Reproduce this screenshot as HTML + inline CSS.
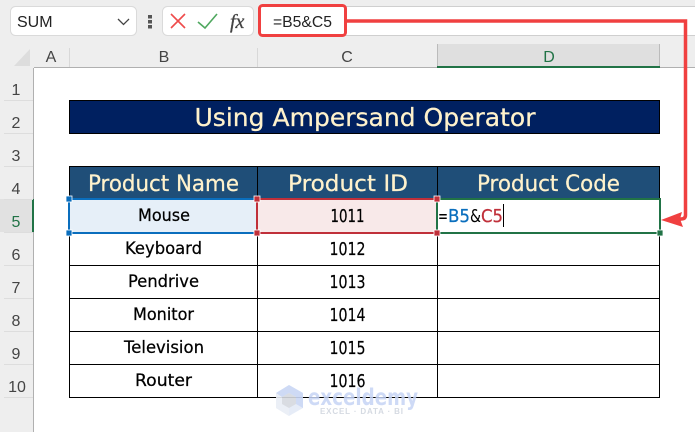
<!DOCTYPE html>
<html><head><meta charset="utf-8"><style>
html,body{margin:0;padding:0;background:#fff;width:695px;height:432px;overflow:hidden}
svg{display:block}
text{font-family:"Comic Sans MS","DejaVu Sans",sans-serif}
.u{font-family:"Liberation Sans",sans-serif}
.t{fill:#FFF2CC;text-anchor:middle;stroke:#FFF2CC;stroke-width:.25}
.c{fill:#000;font-size:17px;text-anchor:middle;stroke:#000;stroke-width:.25}
.n{fill:#000;font-size:18px;text-anchor:middle;stroke:#000;stroke-width:.2}
.h{font-family:"Liberation Sans",sans-serif;fill:#444;font-size:16px;text-anchor:middle}
</style></head><body>
<svg width="695" height="432" viewBox="0 0 695 432" xmlns="http://www.w3.org/2000/svg">
<!-- toolbar -->
<rect x="0" y="0" width="695" height="68" fill="#EEEEEE"/>
<rect x="0" y="68" width="34" height="364" fill="#EEEEEE"/>
<rect x="260" y="6" width="435" height="30" fill="#fff"/>
<rect x="345" y="6" width="350" height="1" fill="#CFCFCF"/>
<rect x="345" y="35" width="350" height="1" fill="#CFCFCF"/>
<rect x="10.500" y="6.500" width="126" height="29" rx="5" fill="#fff" stroke="#DADADA"/>
<text class="u" x="17" y="27" font-size="16" fill="#222">SUM</text>
<path d="M118 19l5.500 5.500 5.500-5.500" fill="none" stroke="#444" stroke-width="1.300"/>
<rect x="148" y="15" width="4" height="3.500" fill="#555"/><rect x="148" y="20" width="4" height="3.500" fill="#555"/><rect x="148" y="25" width="4" height="3.500" fill="#555"/>
<rect x="162.500" y="6.500" width="91" height="29" rx="5" fill="#fff" stroke="#DADADA"/>
<path d="M171 14l14 14M185 14l-14 14" stroke="#EE4B4B" stroke-width="1.600" fill="none"/>
<path d="M198 22l7 6 12-14" stroke="#4FA85F" stroke-width="1.600" fill="none"/>
<text x="230" y="28" font-size="20" font-style="italic" fill="#444" stroke="#444" stroke-width=".3" style="font-family:'Liberation Serif',serif">fx</text>
<!-- red box -->
<rect x="259.500" y="5.500" width="86" height="30" rx="3" fill="#fff" stroke="#F04040" stroke-width="3"/>
<text class="u" x="273" y="27" font-size="16" fill="#222" textLength="59" lengthAdjust="spacingAndGlyphs">=B5&amp;C5</text>
<!-- col headers -->
<rect x="437" y="44" width="223" height="23" fill="#DFDFDF"/>
<rect x="437" y="44" width="1" height="23" fill="#BBB"/><rect x="659" y="44" width="1" height="23" fill="#BBB"/>
<rect x="69" y="48" width="1" height="19" fill="#D8D8D8"/><rect x="257" y="48" width="1" height="19" fill="#D8D8D8"/>
<rect x="34" y="67" width="661" height="1" fill="#B0B0B0"/>
<rect x="437" y="66" width="223" height="2" fill="#217346"/>
<path d="M14 66L30 49V66Z" fill="#DDDDDD"/>
<text class="h" x="51" y="62">A</text><text class="h" x="164" y="62">B</text><text class="h" x="347" y="62">C</text>
<text class="h" x="549" y="62" style="fill:#217346">D</text>
<!-- row headers -->
<rect x="33" y="68" width="1" height="364" fill="#B0B0B0"/>
<rect x="0" y="199" width="32" height="33" fill="#E1E1E1"/>
<rect x="32" y="199" width="2" height="33" fill="#217346"/>
<g fill="#DDD">
<rect x="4" y="100" width="29" height="1"/><rect x="4" y="133" width="29" height="1"/><rect x="4" y="166" width="29" height="1"/><rect x="4" y="199" width="29" height="1"/><rect x="4" y="232" width="29" height="1"/><rect x="4" y="265" width="29" height="1"/><rect x="4" y="298" width="29" height="1"/><rect x="4" y="331" width="29" height="1"/><rect x="4" y="364" width="29" height="1"/><rect x="4" y="397" width="29" height="1"/>
</g>
<text class="h" x="16" y="95">1</text><text class="h" x="16" y="128">2</text><text class="h" x="16" y="161">3</text><text class="h" x="16" y="194">4</text>
<text class="h" x="16" y="227" style="fill:#217346">5</text>
<text class="h" x="16" y="260">6</text><text class="h" x="16" y="293">7</text><text class="h" x="16" y="326">8</text><text class="h" x="16" y="359">9</text><text class="h" x="17" y="392">10</text>
<!-- title -->
<rect x="69.500" y="100.500" width="590" height="33" fill="#002060" stroke="#000"/>
<text class="t" x="365" y="126" font-size="25" textLength="341" lengthAdjust="spacingAndGlyphs">Using Ampersand Operator</text>
<!-- header -->
<rect x="69.500" y="166.500" width="590" height="33" fill="#1F4E78" stroke="#000"/>
<rect x="257" y="166" width="1" height="33" fill="#000"/><rect x="437" y="166" width="1" height="33" fill="#000"/>
<text class="t" x="163.500" y="191" font-size="22" textLength="151" lengthAdjust="spacingAndGlyphs">Product Name</text>
<text class="t" x="348" y="191" font-size="22" textLength="120" lengthAdjust="spacingAndGlyphs">Product ID</text>
<text class="t" x="548.500" y="191" font-size="22" textLength="143" lengthAdjust="spacingAndGlyphs">Product Code</text>
<!-- body grid -->
<rect x="69" y="199" width="188" height="34" fill="#E6EFF8"/>
<rect x="258" y="199" width="179" height="34" fill="#F8E9E9"/>
<g fill="#000">
<rect x="69" y="199" width="1" height="199"/><rect x="257" y="199" width="1" height="199"/><rect x="437" y="199" width="1" height="199"/><rect x="659" y="199" width="1" height="199"/>
<rect x="69" y="265" width="591" height="1"/><rect x="69" y="298" width="591" height="1"/><rect x="69" y="331" width="591" height="1"/><rect x="69" y="364" width="591" height="1"/><rect x="69" y="397" width="591" height="1"/>
</g>
<!-- cells -->
<text class="c" x="164" y="221" textLength="52" lengthAdjust="spacingAndGlyphs">Mouse</text>
<text class="c" x="163.500" y="254" textLength="77" lengthAdjust="spacingAndGlyphs">Keyboard</text>
<text class="c" x="163.500" y="287" textLength="71" lengthAdjust="spacingAndGlyphs">Pendrive</text>
<text class="c" x="163.500" y="320" textLength="61" lengthAdjust="spacingAndGlyphs">Monitor</text>
<text class="c" x="164" y="353" textLength="80" lengthAdjust="spacingAndGlyphs">Television</text>
<text class="c" x="163.500" y="386" textLength="57" lengthAdjust="spacingAndGlyphs">Router</text>
<text class="n" x="347.500" y="222" textLength="34" lengthAdjust="spacingAndGlyphs">1011</text>
<text class="n" x="347.500" y="255" textLength="36" lengthAdjust="spacingAndGlyphs">1012</text>
<text class="n" x="347.500" y="288" textLength="36" lengthAdjust="spacingAndGlyphs">1013</text>
<text class="n" x="347.500" y="321" textLength="36" lengthAdjust="spacingAndGlyphs">1014</text>
<text class="n" x="347.500" y="354" textLength="36" lengthAdjust="spacingAndGlyphs">1015</text>
<text class="n" x="347.500" y="387" textLength="36" lengthAdjust="spacingAndGlyphs">1016</text>
<!-- selections -->
<rect x="69" y="199" width="188" height="34" fill="none" stroke="#0A6EBD" stroke-width="2"/>
<rect x="257" y="199" width="180" height="34" fill="none" stroke="#C0303A" stroke-width="2"/>
<rect x="437" y="199" width="223" height="34" fill="none" stroke="#217346" stroke-width="2"/>
<rect x="66" y="196" width="6" height="6" fill="#0A6EBD" stroke="#fff" stroke-width=".8"/>
<rect x="66" y="230" width="6" height="6" fill="#0A6EBD" stroke="#fff" stroke-width=".8"/>
<rect x="254" y="196" width="6" height="6" fill="#C0303A" stroke="#fff" stroke-width=".8"/>
<rect x="254" y="230" width="6" height="6" fill="#C0303A" stroke="#fff" stroke-width=".8"/>
<rect x="434" y="196" width="6" height="6" fill="#C0303A" stroke="#fff" stroke-width=".8"/>
<rect x="434" y="230" width="6" height="6" fill="#C0303A" stroke="#fff" stroke-width=".8"/>
<rect x="657" y="230" width="6" height="6" fill="#217346" stroke="#fff" stroke-width=".8"/>
<text x="438" y="222" font-size="18" textLength="10" lengthAdjust="spacingAndGlyphs" fill="#000">=</text>
<text x="448" y="222" font-size="18" textLength="22" lengthAdjust="spacingAndGlyphs" fill="#0A6EBD" stroke="#0A6EBD" stroke-width=".25">B5</text>
<text x="470" y="222" font-size="18" textLength="11" lengthAdjust="spacingAndGlyphs" fill="#000">&amp;</text>
<text x="481" y="222" font-size="18" textLength="22" lengthAdjust="spacingAndGlyphs" fill="#C0303A" stroke="#C0303A" stroke-width=".25">C5</text>
<rect x="503" y="204" width="1" height="23" fill="#000"/>
<!-- arrow -->
<path d="M346 21H685.500V215Q685.500 219 681 219L673 222" fill="none" stroke="#F04040" stroke-width="3.500"/>
<path d="M661 220L682 212L680 219L683 227Z" fill="#F04040"/>
<!-- watermark -->
<g opacity=".9">
<path d="M289 385L303 393V408L289 416L276 408V393Z" fill="#E4EAF7"/>
<path d="M289 385L303 393V408L296 404V397L289 393L282 397L276 393Z" fill="#C9D6F5"/>
<path d="M276 393L282 397V404L289 408V416L276 408Z" fill="#E9EEF6"/>
<path d="M282 397L289 393L296 397V404L289 408L282 404Z" fill="#D5D9DF"/>
</g>
<text x="308" y="405" font-size="23" font-weight="bold" fill="#C6D4F5" fill-opacity=".85" textLength="110" lengthAdjust="spacingAndGlyphs">exceldemy</text>
<text x="320" y="414" font-size="8" font-weight="bold" fill="#D5DAE2" textLength="83" lengthAdjust="spacing" style="font-family:'Liberation Sans',sans-serif">EXCEL · DATA · BI</text>
</svg>
</body></html>
